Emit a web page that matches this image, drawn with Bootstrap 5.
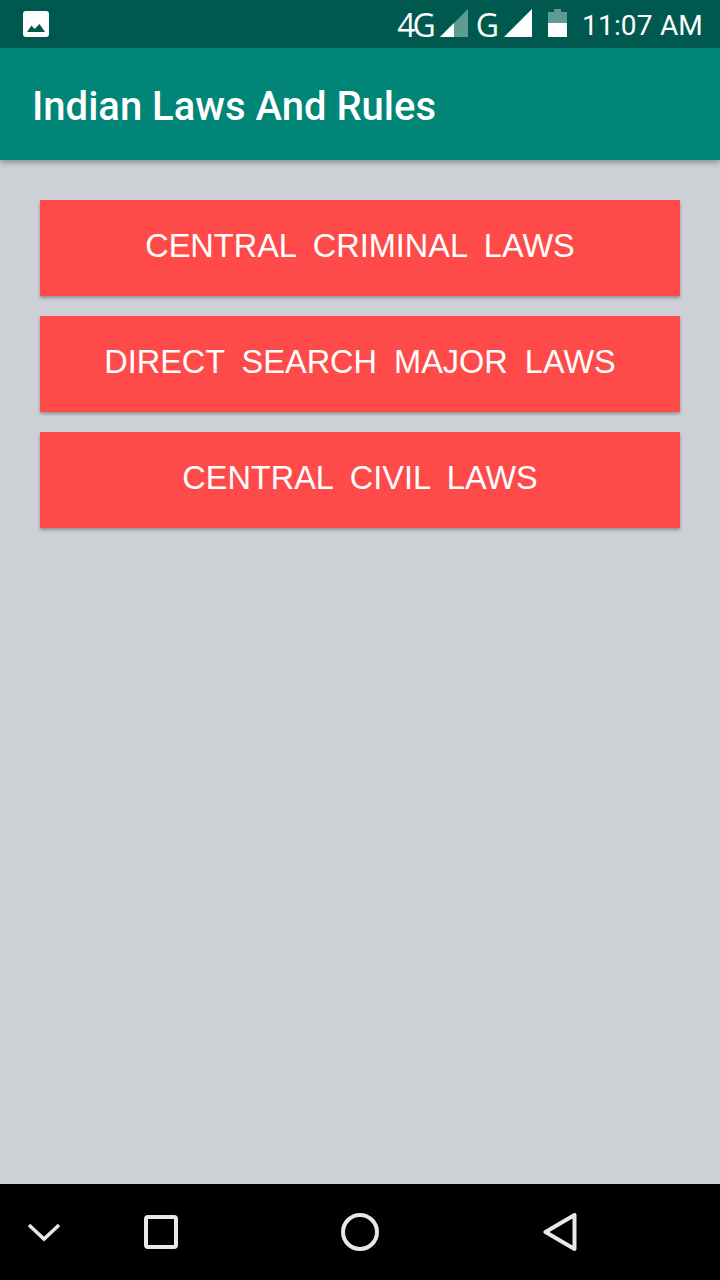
<!DOCTYPE html>
<html lang="en">
<head>
<meta charset="UTF-8" />
<meta name="viewport" content="width=device-width, initial-scale=1.0" />
<title>Indian Laws And Rules</title>
<link href="https://cdn.jsdelivr.net/npm/bootstrap@5.3.3/dist/css/bootstrap.min.css" rel="stylesheet" />
<style>
html, body { height: 100%; }
body { background: #cdd0d5; font-family: "Liberation Sans", sans-serif; overflow: hidden; }
.phone { width: 720px; height: 1280px; }
.status-bar { height: 48px; background: #00594f; color: #fff; padding: 0 17px 0 23px; }
.status-time { font: 400 28px/48px Roboto, sans-serif; letter-spacing: .2px; margin-left: 15px; padding-top: 4px; }
.status-net { font: 400 32px/48px "Open Sans", sans-serif; letter-spacing: -3px; padding-top: 2px; }
.net-g { margin-left: 8px; margin-right: 5px; }
.signal { margin-left: 7px; margin-bottom: 2px; }
.net-g + .signal { margin-left: 3px; }
.batt { margin-left: 16px; margin-bottom: 2px; }
.app-bar { height: 112px; background: #008577; color: #fff; padding: 6px 0 0 32px; box-shadow: 0 3px 5px rgba(0,0,0,.28); position: relative; z-index: 1; }
.app-title { font: 500 40px/1 Roboto, sans-serif; margin: 0; }
.content-area { padding: 40px; gap: 20px; }
.law-btn { height: 96px; padding: 0 0 4px; border: 0; border-radius: 0; background: #ff4a4a; color: #fff; font: 400 32.5px/1 "Liberation Sans", sans-serif; word-spacing: 8px; box-shadow: 0 2px 3px rgba(0,0,0,.3); }
.law-btn:hover, .law-btn:active { background: #ff4a4a !important; color: #fff !important; }
.nav-bar { height: 96px; background: #000; }
.nav-bar svg { display: block; }
.nav-hide { margin-left: 26px; }
.nav-recent { margin-left: 82px; }
.nav-home { margin-left: 163px; }
.nav-back { margin-left: 164px; }
</style>
</head>
<body>
<div class="phone d-flex flex-column">
	<div class="status-bar d-flex align-items-center flex-shrink-0">
		<svg width="26" height="26" viewBox="0 0 26 26"><rect width="26" height="26" rx="3" fill="#fff"/><path d="M4 21 L8.500 14.500 L11.500 18 L16.500 13 L22 21 Z" fill="#00594f"/></svg>
		<div class="ms-auto d-flex align-items-center">
			<span class="status-net">4G</span>
			<svg class="signal" width="28" height="28" viewBox="0 0 28 28"><path d="M0 28 L28 0 V28 Z" fill="#5c9c92"/><path d="M0 28 L14 14 V28 Z" fill="#fff"/></svg>
			<span class="status-net net-g">G</span>
			<svg class="signal" width="28" height="28" viewBox="0 0 28 28"><path d="M0 28 L28 0 V28 Z" fill="#fff"/></svg>
			<svg class="batt" width="19" height="28" viewBox="0 0 19 28"><path d="M6 0 H13 V3 H19 V28 H0 V3 H6 Z" fill="#5c9c92"/><rect y="14" width="19" height="14" fill="#fff"/></svg>
			<span class="status-time">11:07 AM</span>
		</div>
	</div>
	<div class="app-bar d-flex align-items-center flex-shrink-0">
		<h1 class="app-title">Indian Laws And Rules</h1>
	</div>
	<div class="content-area flex-grow-1 d-flex flex-column">
		<button class="btn law-btn w-100">CENTRAL CRIMINAL LAWS</button>
		<button class="btn law-btn w-100">DIRECT SEARCH MAJOR LAWS</button>
		<button class="btn law-btn w-100">CENTRAL CIVIL LAWS</button>
	</div>
	<div class="nav-bar d-flex align-items-center flex-shrink-0">
		<svg class="nav-hide" width="36" height="20" viewBox="0 0 36 20"><path d="M3 3 L18 17 L33 3" fill="none" stroke="#e8e8e8" stroke-width="3.500"/></svg>
		<svg class="nav-recent" width="34" height="34" viewBox="0 0 34 34"><rect x="2" y="2" width="30" height="30" rx="2" fill="none" stroke="#e8e8e8" stroke-width="4"/></svg>
		<svg class="nav-home" width="38" height="38" viewBox="0 0 38 38"><circle cx="19" cy="19" r="17" fill="none" stroke="#e8e8e8" stroke-width="4"/></svg>
		<svg class="nav-back" width="34" height="38" viewBox="0 0 34 38"><path d="M31.500 2 V36 L2.500 19 Z" fill="none" stroke="#e8e8e8" stroke-width="4" stroke-linejoin="round"/></svg>
	</div>
</div>
<script src="https://cdn.jsdelivr.net/npm/bootstrap@5.3.3/dist/js/bootstrap.bundle.min.js"></script>
</body>
</html>
